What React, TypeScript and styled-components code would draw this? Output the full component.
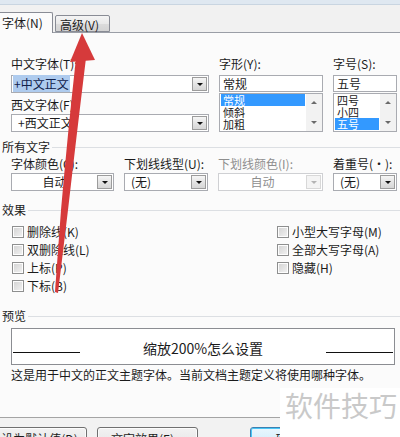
import styled, { createGlobalStyle } from "styled-components";

const GlobalStyle = createGlobalStyle`
  html, body {
    margin: 0;
    padding: 0;
    background: #fbfbfb;
  }
  body {
    font-family: "Noto Sans CJK SC", "Liberation Sans", sans-serif;
    font-size: 12px;
    color: #1b1b1b;
  }
`;

const Dialog = styled.div`
  position: relative;
  width: 400px;
  height: 437px;
  overflow: hidden;
  display: flex;
  flex-direction: column;
  background: #fbfbfb;
`;

const FrameEdge = styled.div`
  flex: none;
  height: 5px;
  box-sizing: border-box;
  background: #dfe8f1;
  border-bottom: 1px solid #c9d5e1;
`;

const TabBar = styled.div`
  flex: none;
  height: 28px;
  box-sizing: border-box;
  display: flex;
  align-items: flex-end;
  gap: 2px;
  background: #f1f1f1;
  border-bottom: 1px solid #9a9ea6;
`;

const Tab = styled.div<{ $active?: boolean }>`
  position: relative;
  z-index: 1;
  box-sizing: border-box;
  display: flex;
  align-items: center;
  width: ${(p) => (p.$active ? 59 : 55)}px;
  height: ${(p) => (p.$active ? 21 : 17)}px;
  margin-bottom: ${(p) => (p.$active ? -1 : 0)}px;
  padding: ${(p) => (p.$active ? "0 0 0 7px" : "2px 0 0 4px")};
  border: 1px solid #898c95;
  border-bottom: ${(p) => (p.$active ? "none" : "1px solid #898c95")};
  border-radius: 2px 2px 0 0;
  background: ${(p) =>
    p.$active ? "#fbfbfb" : "linear-gradient(#f4f4f4, #e9e9e9 50%, #dcdcdc 51%, #d3d3d3)"};
  line-height: 14px;
  white-space: nowrap;

  &:first-child {
    margin-left: -6px;
  }
`;

const Body = styled.div`
  flex: none;
  height: 384px;
  box-sizing: border-box;
  padding: 24px 3px 0 11px;
  display: flex;
  flex-direction: column;
`;

const FontRow = styled.div`
  display: grid;
  grid-template-columns: 198px 104px 64px;
  column-gap: 10px;
`;

const Column = styled.div`
  display: flex;
  flex-direction: column;
`;

const Label = styled.div<{ $disabled?: boolean; $gap?: number }>`
  height: 14px;
  line-height: 14px;
  margin-top: ${(p) => p.$gap ?? 0}px;
  white-space: nowrap;
  color: ${(p) => (p.$disabled ? "#8e8e8e" : "#1b1b1b")};
`;

const Combo = styled.div<{ $disabled?: boolean; $gap?: number }>`
  box-sizing: border-box;
  height: 18px;
  margin-top: ${(p) => p.$gap ?? 2}px;
  display: flex;
  align-items: center;
  border: 1px solid ${(p) => (p.$disabled ? "#cfd0d3" : "#a9abb1")};
  background: #fff;
`;

const ComboText = styled.div<{ $center?: boolean; $disabled?: boolean }>`
  flex: 1;
  min-width: 0;
  padding-left: ${(p) => (p.$center ? 0 : 6)}px;
  text-align: ${(p) => (p.$center ? "center" : "left")};
  line-height: 14px;
  white-space: nowrap;
  color: ${(p) => (p.$disabled ? "#8e8e8e" : "#1b1b1b")};
`;

const Selected = styled.span`
  margin-left: -5px;
  padding: 0 1px;
  background: #aecbee;
  color: #10204a;
`;

const DropBtn = styled.div<{ $disabled?: boolean }>`
  box-sizing: border-box;
  flex: none;
  width: 15px;
  height: 14px;
  margin-right: 1px;
  display: flex;
  align-items: center;
  justify-content: center;
  border: 1px solid ${(p) => (p.$disabled ? "#d8d8d8" : "#9c9c9c")};
  background: ${(p) =>
    p.$disabled ? "#f4f4f4" : "linear-gradient(#f6f6f6, #e4e4e4 50%, #d6d6d6)"};

  &::after {
    content: "";
    width: 0;
    height: 0;
    border-left: 3px solid transparent;
    border-right: 3px solid transparent;
    border-top: 3px solid ${(p) => (p.$disabled ? "#b4b4b4" : "#111")};
  }
`;

const TextBox = styled.div`
  box-sizing: border-box;
  height: 17px;
  margin-top: 4px;
  padding-left: 3px;
  border: 1px solid #a9abb1;
  background: #fff;
  line-height: 15px;
`;

const ListBox = styled.div`
  box-sizing: border-box;
  height: 39px;
  margin-top: 1px;
  display: flex;
  border: 1px solid #a9abb1;
  background: #fff;
`;

const Items = styled.div`
  flex: 1;
  padding: 0 1px;
  display: flex;
  flex-direction: column;
`;

const Item = styled.div<{ $selected?: boolean }>`
  height: 12px;
  font-size: 11px;
  line-height: 12px;
  padding-left: 2px;
  background: ${(p) => (p.$selected ? "#3399ff" : "transparent")};
  color: ${(p) => (p.$selected ? "#fff" : "#1b1b1b")};
`;

const Scroll = styled.div`
  flex: none;
  width: 16px;
  display: flex;
  flex-direction: column;
  justify-content: space-between;
  background: #f2f2f2;
`;

const ScrollArrow = styled.div<{ $down?: boolean }>`
  height: 17px;
  display: flex;
  align-items: center;
  justify-content: center;

  &::after {
    content: "";
    width: 0;
    height: 0;
    border-left: 3px solid transparent;
    border-right: 3px solid transparent;
    ${(p) => (p.$down ? "border-top" : "border-bottom")}: 3px solid #6a6a6a;
  }
`;

const Section = styled.div<{ $gap: number }>`
  display: flex;
  align-items: center;
  gap: 2px;
  margin: ${(p) => p.$gap}px -3px 0 -9px;
  height: 14px;
  line-height: 14px;

  &::after {
    content: "";
    flex: 1;
    height: 1px;
    background: #dcdfe3;
  }
`;

const AttrRow = styled.div`
  display: grid;
  grid-template-columns: 103px 84px 105px 64px;
  column-gap: 10px;
  margin-top: 3px;
`;

const CheckGrid = styled.div`
  display: grid;
  grid-template-columns: 265px 1fr;
  grid-template-rows: repeat(4, 18px);
  grid-auto-flow: column;
  margin-top: 6px;
  padding-left: 1px;
`;

const Check = styled.label`
  display: flex;
  align-items: center;
  gap: 3px;
  line-height: 14px;
  white-space: nowrap;
`;

const CheckBox = styled.span`
  box-sizing: border-box;
  width: 12px;
  height: 12px;
  border: 1px solid #8e8f8f;
  background: linear-gradient(135deg, #d2d2d2, #f3f3f3);
  box-shadow: inset 0 0 0 1px #fdfdfd;
`;

const Preview = styled.div`
  box-sizing: border-box;
  width: 384px;
  height: 37px;
  margin-top: 5px;
  display: flex;
  align-items: center;
  justify-content: space-between;
  padding: 0 1px;
  border: 1px solid #8b8d92;
  background: #fff;
`;

const BaseLine = styled.div`
  width: 67px;
  height: 1px;
  margin-top: 11px;
  background: #111;
`;

const PreviewText = styled.div`
  font-size: 14px;
  line-height: 18px;
  margin-top: 3px;
`;

const Caption = styled.div`
  margin-top: 3px;
  line-height: 14px;
  white-space: nowrap;
`;

const Footer = styled.div`
  flex: 1;
  display: flex;
  align-items: flex-start;
  padding-top: 9px;
  border-top: 1px solid #a4a4a4;
  background: #f2f2f2;
`;

const Button = styled.div<{ $w: number; $gap: number; $primary?: boolean }>`
  flex: none;
  box-sizing: border-box;
  width: ${(p) => p.$w}px;
  height: 23px;
  margin-left: ${(p) => p.$gap}px;
  border: 1px solid ${(p) => (p.$primary ? "#3c7fb1" : "#707070")};
  border-radius: 3px;
  background: ${(p) =>
    p.$primary
      ? "linear-gradient(#eaf6fd, #d9f0fc 50%, #bee6fd 51%, #a7d9f5)"
      : "linear-gradient(#f2f2f2, #ebebeb 50%, #dddddd 51%, #cfcfcf)"};
  box-shadow: inset 0 0 0 1px ${(p) => (p.$primary ? "#48c6f6" : "#fcfcfc")};
  text-align: center;
  line-height: 21px;
  white-space: nowrap;
`;

const Watermark = styled.div`
  position: absolute;
  left: 280px;
  top: 388px;
  right: 0;
  bottom: 0;
  padding-left: 5px;
  background: #fff;
  color: #c9c9c9;
  font-size: 28px;
  line-height: 34px;
  white-space: nowrap;
`;

const ArrowLayer = styled.svg`
  position: absolute;
  left: 0;
  top: 0;
  pointer-events: none;
`;

const STYLES = ["常规", "倾斜", "加粗"];
const SIZES = ["四号", "小四", "五号"];

const ATTRS = [
  { label: "字体颜色(C):", value: "自动", center: true },
  { label: "下划线线型(U):", value: "(无)" },
  { label: "下划线颜色(I):", value: "自动", center: true, disabled: true },
  { label: "着重号(·):", value: "(无)" },
];

const EFFECTS = [
  "删除线(K)",
  "双删除线(L)",
  "上标(P)",
  "下标(B)",
  "小型大写字母(M)",
  "全部大写字母(A)",
  "隐藏(H)",
];

const List = ({ items, selected }: { items: string[]; selected: string }) => (
  <ListBox>
    <Items>
      {items.map((it) => (
        <Item key={it} $selected={it === selected}>
          {it}
        </Item>
      ))}
    </Items>
    <Scroll>
      <ScrollArrow />
      <ScrollArrow $down />
    </Scroll>
  </ListBox>
);

const App = () => {
  return (
    <>
      <GlobalStyle />
      <Dialog>
        <FrameEdge />
        <TabBar>
          <Tab $active>字体(N)</Tab>
          <Tab>高级(V)</Tab>
        </TabBar>

        <Body>
          <FontRow>
            <Column>
              <Label>中文字体(T):</Label>
              <Combo $gap={4}>
                <ComboText>
                  <Selected>+中文正文</Selected>
                </ComboText>
                <DropBtn />
              </Combo>
              <Label $gap={5}>西文字体(F):</Label>
              <Combo>
                <ComboText>+西文正文</ComboText>
                <DropBtn />
              </Combo>
            </Column>
            <Column>
              <Label>字形(Y):</Label>
              <TextBox>常规</TextBox>
              <List items={STYLES} selected="常规" />
            </Column>
            <Column>
              <Label>字号(S):</Label>
              <TextBox>五号</TextBox>
              <List items={SIZES} selected="五号" />
            </Column>
          </FontRow>

          <Section $gap={8}>所有文字</Section>
          <AttrRow>
            {ATTRS.map((a) => (
              <Column key={a.label}>
                <Label $disabled={a.disabled}>{a.label}</Label>
                <Combo $disabled={a.disabled}>
                  <ComboText $center={a.center} $disabled={a.disabled}>
                    {a.value}
                  </ComboText>
                  <DropBtn $disabled={a.disabled} />
                </Combo>
              </Column>
            ))}
          </AttrRow>

          <Section $gap={12}>效果</Section>
          <CheckGrid>
            {EFFECTS.map((e) => (
              <Check key={e}>
                <CheckBox />
                {e}
              </Check>
            ))}
          </CheckGrid>

          <Section $gap={14}>预览</Section>
          <Preview>
            <BaseLine />
            <PreviewText>缩放200%怎么设置</PreviewText>
            <BaseLine />
          </Preview>
          <Caption>这是用于中文的正文主题字体。当前文档主题定义将使用哪种字体。</Caption>
        </Body>

        <Footer>
          <Button $w={95} $gap={-8}>设为默认值(D)</Button>
          <Button $w={101} $gap={10}>文字效果(E)...</Button>
          <Button $w={75} $gap={52} $primary>确定</Button>
        </Footer>

        <Watermark>软件技巧</Watermark>

        <ArrowLayer width="400" height="437" viewBox="0 0 400 437">
          <path d="M76 58 L86 58 Q76 140 68 210 L58 293 L55 292 Q58 250 61 210 Q68 130 76 58 Z" fill="#d63a3b" />
          <path d="M82 33 L95 60 L70 62 Z" fill="#d63a3b" />
        </ArrowLayer>
      </Dialog>
    </>
  );
};

export default App;
